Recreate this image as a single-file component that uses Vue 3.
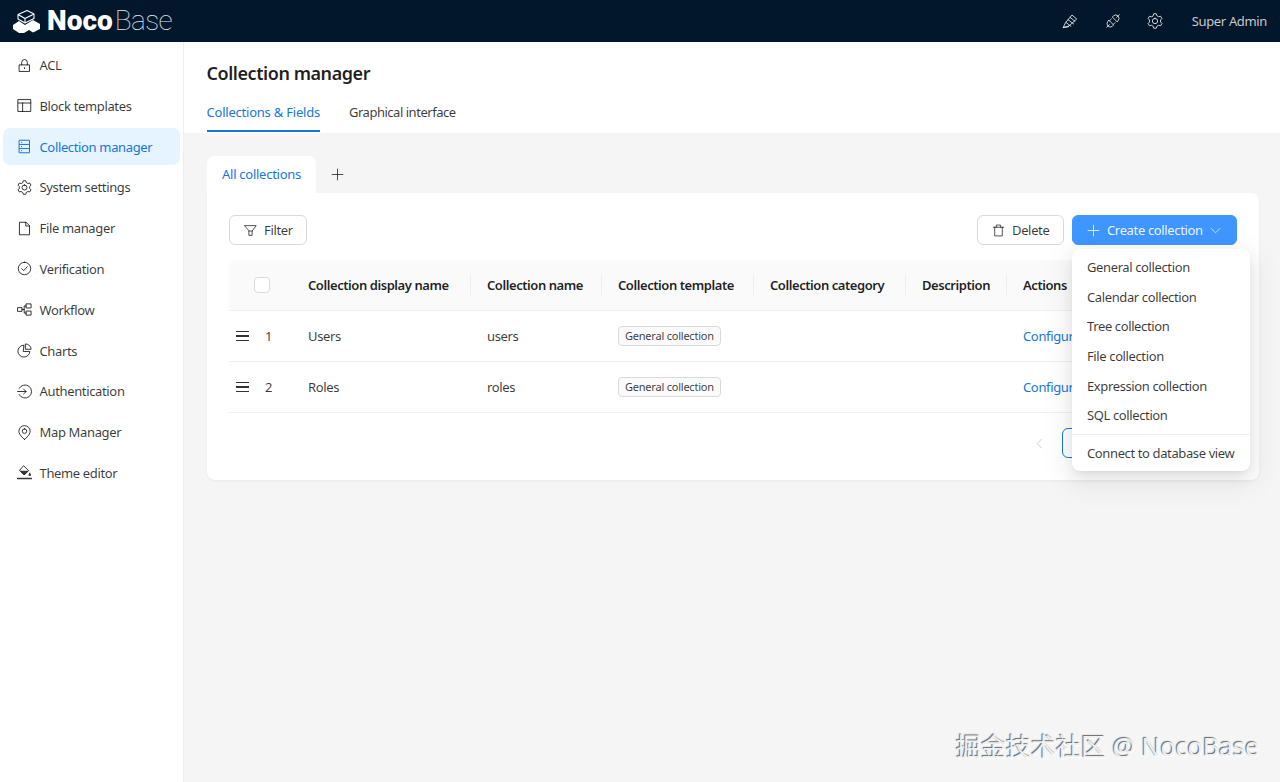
<script setup>
const gear = (() => {
  const pts = [];
  const n = 6;
  for (let i = 0; i < n; i++) {
    const a = (i / n) * Math.PI * 2 - Math.PI / 2;
    const w = Math.PI / n;
    const p = (r, t) => `${(12 + r * Math.cos(t)).toFixed(2)} ${(12 + r * Math.sin(t)).toFixed(2)}`;
    pts.push(p(8.4, a - w * 0.66), p(11, a - w * 0.34), p(11, a + w * 0.34), p(8.4, a + w * 0.66));
  }
  return `M${pts.join('L')}Z M12 8a4 4 0 1 0 0 8a4 4 0 1 0 0-8Z`;
})();

const icons = {
  lock: 'M4 11h16v10.500H4Z M7.500 11V7a4.500 4.500 0 0 1 9 0v4 M12 15.500v1.500',
  layout: 'M2 2.500h20v19H2Z M2 8h20 M9 8v13.500',
  table: 'M4 2h16v20H4Z M4 8.700h16 M4 15.300h16 M7 5.400h.6 M7 12h.6 M7 18.700h.6',
  gear,
  file: 'M4.500 2h10L20 7.500V22H4.500Z M14 2v6h6',
  check: 'M12 2a10 10 0 1 0 0 20a10 10 0 1 0 0-20Z M7.500 12.200l3.200 3.200l5.800-6.400',
  flow: 'M1.500 9h6.500v6H1.500Z M15 3h7.500v6.500H15Z M15 14.500h7.500V21H15Z M8 12h3.500V6.300H15 M11.500 12v5.700H15',
  pie: 'M10.500 3.500a9.500 9.500 0 1 0 10 10H10.500Z M14 1.500a8.500 8.500 0 0 1 8.500 8.500H14Z',
  login: 'M3.500 7A10.500 10.500 0 1 1 3.500 17 M1 12H14.500 M10.500 8L14.500 12l-4 4',
  pin: 'M12 23s-9-6.500-9-13a9 9 0 0 1 18 0C21 16.500 12 23 12 23Z M12 6.200a3.600 3.600 0 1 0 0 7.200a3.600 3.600 0 1 0 0-7.200Z',
  brush: 'M2 21.500L5 15L15 3l7 6L11 19Z M2 21.500L9 21L11 19 M5.800 14l7.700 6 M9 10l8.500 6.500 M12 6.500l7.500 6',
  plug: 'M2.500 21.500l4-4 M21.500 2.500l-4 4 M6 11l7 7l-2 2a5 5 0 0 1-7-7Z M18 13l-7-7l2-2a5 5 0 0 1 7 7Z M9.500 9l-2.500 2.500 M15 14.500l-2.500 2.500',
  filter: 'M1.500 3h21L15 13v8H9v-8Z M9 13h6',
  trash: 'M2.500 6h19 M8 6V2h8v4 M5 6v16h14V6',
  plus: 'M12 2v20 M2 12h20',
  down: 'M2.500 7.500L12 17l9.500-9.500',
  left: 'M16.500 2.500L7 12l9.500 9.500',
};

const menu = [
  { label: 'ACL', icon: 'lock' },
  { label: 'Block templates', icon: 'layout' },
  { label: 'Collection manager', icon: 'table', active: true },
  { label: 'System settings', icon: 'gear' },
  { label: 'File manager', icon: 'file' },
  { label: 'Verification', icon: 'check' },
  { label: 'Workflow', icon: 'flow' },
  { label: 'Charts', icon: 'pie' },
  { label: 'Authentication', icon: 'login' },
  { label: 'Map Manager', icon: 'pin' },
  { label: 'Theme editor', icon: 'paint' },
];

const heads = ['Collection display name', 'Collection name', 'Collection template', 'Collection category', 'Description', 'Actions'];
const rows = [
  { id: 1, title: 'Users', name: 'users' },
  { id: 2, title: 'Roles', name: 'roles' },
];
const options = ['General collection', 'Calendar collection', 'Tree collection', 'File collection', 'Expression collection', 'SQL collection'];
</script>

<template>
  <div class="app">
    <header class="top">
      <div class="logo">
        <svg class="logo-mark" viewBox="0 0 27 23" width="27" height="23">
          <path d="M5 4.500L14 .5L21 4L12 8.500Z M5 4.500V9L12 13V8.500 M21 4V8.500L12 13" fill="none" stroke="#fff" stroke-width="1.100" stroke-linejoin="round" />
          <path d="M0 15L6 11L12 15L20 10L27 14V19L20 22.500L16 20L11 23H6L0 19Z" fill="#fff" />
        </svg>
        <span class="logo-a">Noco</span><span class="logo-b">Base</span>
      </div>
      <div class="top-actions">
        <svg class="ic top-ic" viewBox="0 0 24 24"><path :d="icons.brush" /></svg>
        <svg class="ic top-ic" viewBox="0 0 24 24"><path :d="icons.plug" /></svg>
        <svg class="ic top-ic" viewBox="0 0 24 24"><path :d="icons.gear" /></svg>
        <span class="user">Super Admin</span>
      </div>
    </header>
    <div class="body">
      <aside class="side">
        <div v-for="m in menu" :key="m.label" class="mi" :class="{ active: m.active }">
          <svg class="ic mi-ic" viewBox="0 0 24 24">
            <template v-if="m.icon === 'paint'">
              <path d="M11 1.500l7.500 7.500L11.500 16L4.500 9Z" />
              <path d="M4.500 9h14L11.500 16Z" class="solid" />
              <path d="M20.500 11.500l1.800 3.500a1.900 1.900 0 1 1-3.600 0Z" class="solid" />
              <path d="M1 21.500h22" class="thick" />
            </template>
            <path v-else :d="icons[m.icon]" />
          </svg>
          <span>{{ m.label }}</span>
        </div>
      </aside>
      <main class="main">
        <section class="page-head">
          <h1>Collection manager</h1>
          <nav class="tabs">
            <span class="tab on">Collections &amp; Fields</span>
            <span class="tab second">Graphical interface</span>
          </nav>
        </section>
        <section class="content">
          <div class="subtabs">
            <span class="subtab">All collections</span>
            <svg class="ic add" viewBox="0 0 24 24"><path :d="icons.plus" /></svg>
          </div>
          <div class="card">
            <div class="bar">
              <button class="btn filter">
                <svg class="ic btn-ic" viewBox="0 0 24 24"><path :d="icons.filter" /></svg>Filter
              </button>
              <div class="bar-right">
                <button class="btn del">
                  <svg class="ic btn-ic" viewBox="0 0 24 24"><path :d="icons.trash" /></svg>Delete
                </button>
                <button class="btn primary">
                  <svg class="ic btn-ic" viewBox="0 0 24 24"><path :d="icons.plus" /></svg>Create collection
                  <svg class="ic chev" viewBox="0 0 24 24"><path :d="icons.down" /></svg>
                </button>
              </div>
            </div>
            <div class="table">
              <div class="tr thead">
                <div class="td sel"><span class="checkbox"></span></div>
                <div v-for="h in heads" :key="h" class="td th">{{ h }}</div>
              </div>
              <div v-for="r in rows" :key="r.id" class="tr">
                <div class="td sel">
                  <span class="drag"><i></i><i></i><i></i></span>
                  <span class="num">{{ r.id }}</span>
                </div>
                <div class="td">{{ r.title }}</div>
                <div class="td">{{ r.name }}</div>
                <div class="td"><span class="tag">General collection</span></div>
                <div class="td"></div>
                <div class="td"></div>
                <div class="td link">Configure</div>
              </div>
            </div>
            <div class="pager">
              <svg class="ic pg-left" viewBox="0 0 24 24"><path :d="icons.left" /></svg>
              <span class="pg-num">1</span>
            </div>
            <div class="dropdown">
              <div v-for="o in options" :key="o" class="dd">{{ o }}</div>
              <div class="dd-sep"></div>
              <div class="dd">Connect to database view</div>
            </div>
          </div>
        </section>
      </main>
    </div>
    <div class="mark">掘金技术社区 @ NocoBase</div>
  </div>
</template>

<style>
html, body { margin: 0; background: #f5f5f5; }
</style>

<style scoped>
.app {
  width: 1280px;
  height: 782px;
  overflow: hidden;
  position: relative;
  display: flex;
  flex-direction: column;
  font-family: "Noto Sans", "Noto Sans CJK SC", sans-serif;
  font-size: 13px;
  letter-spacing: -0.35px;
  color: rgba(0, 0, 0, 0.78);
  background: #f5f5f5;
}
.ic { fill: none; stroke: currentColor; stroke-width: 1.600; stroke-linejoin: round; stroke-linecap: round; flex: none; }
.solid { fill: currentColor; stroke: none; }
.thick { stroke-width: 2.400; }
.top {
  height: 42px;
  flex: none;
  background: #02162c;
  color: #fff;
  display: flex;
  align-items: center;
  justify-content: space-between;
  padding: 0 13px;
}
.logo { display: flex; align-items: center; font-family: Roboto, sans-serif; font-size: 28px; line-height: 1; letter-spacing: 0; }
.logo-mark { margin-right: 7px; }
.logo-a { font-weight: 900; letter-spacing: 0; }
.logo-b { font-weight: 100; margin-left: 2px; letter-spacing: -0.6px; color: #dfe6ee; }
.top-actions { display: flex; align-items: center; color: rgba(255, 255, 255, 0.78); }
.top-ic { width: 16px; height: 16px; margin-right: 26.500px; stroke-width: 1.500; }
.user { font-size: 13px; margin-left: 2px; }
.body { flex: 1; display: flex; min-height: 0; }
.side {
  flex: none;
  background: #fff;
  border-right: 1px solid #eeeeee;
  padding: 4.500px 3px 0;
  box-sizing: content-box;
  width: 177px;
}
.mi {
  height: 37px;
  margin-bottom: 3.800px;
  display: flex;
  align-items: center;
  padding-left: 14px;
  border-radius: 7px;
  gap: 7.500px;
}
.mi.active { background: #e6f4ff; color: #1677e0; }
.mi-ic { width: 15px; height: 15px; }
.main { flex: 1; min-width: 0; display: flex; flex-direction: column; }
.page-head { background: #fff; height: 91px; padding: 0 22.500px; box-sizing: border-box; flex: none; }
h1 { margin: 0; padding-top: 19px; font-size: 18px; line-height: 25px; font-weight: 600; letter-spacing: -0.44px; color: rgba(0, 0, 0, 0.88); }
.tabs { display: flex; gap: 29px; margin-top: 16px; }
.tab { padding-bottom: 8px; line-height: 20px; border-bottom: 2px solid transparent; }
.tab.on { color: #1677e0; border-bottom-color: #1677e0; letter-spacing: -0.22px; }
.tab.second { letter-spacing: -0.47px; }
.content { padding: 23px 21px 0 23px; }
.subtabs { display: flex; align-items: center; height: 37px; }
.subtab {
  width: 109px;
  height: 37px;
  background: #fff;
  color: #1677e0;
  border-radius: 8px 8px 0 0;
  display: flex;
  align-items: center;
  justify-content: center;
  letter-spacing: -0.27px;
  padding-bottom: 1px;
  box-sizing: border-box;
}
.add { width: 13px; height: 13px; margin-left: 15px; }
.card {
  position: relative;
  height: 287px;
  background: #fff;
  border-radius: 0 8px 8px 8px;
  box-shadow: 0 1px 3px rgba(0, 0, 0, 0.05);
  padding: 22px;
  box-sizing: border-box;
}
.bar { display: flex; justify-content: space-between; height: 30px; margin-bottom: 15px; }
.bar-right { display: flex; gap: 8px; }
.btn {
  font: inherit;
  letter-spacing: inherit;
  color: inherit;
  height: 30px;
  padding: 0 14px;
  background: #fff;
  border: 1px solid #d9d9d9;
  border-radius: 6px;
  display: flex;
  align-items: center;
  gap: 7px;
}
.btn.filter { width: 78px; }
.btn.del { width: 87px; }
.btn-ic { width: 13px; height: 13px; }
.btn.primary { background: #4096ff; border-color: #4096ff; color: rgba(255, 255, 255, 0.92); padding: 0 14px; width: 165px; }
.chev { width: 11px; height: 11px; margin-left: 0; }
.table { width: 1008px; }
.tr {
  display: grid;
  grid-template-columns: 68px 179px 131px 152px 152px 101px 225px;
  height: 51px;
  border-bottom: 1px solid #f0f0f0;
  box-sizing: border-box;
  align-items: center;
}
.thead { background: #fafafa; border-radius: 8px 8px 0 0; }
.td { padding-left: 11px; white-space: nowrap; overflow: hidden; }
.th { font-weight: 600; letter-spacing: -0.43px; color: rgba(0, 0, 0, 0.88); position: relative; overflow: visible; }
.th::after {
  content: "";
  position: absolute;
  right: 5px;
  top: -1px;
  bottom: -1px;
  width: 1px;
  background: #eeeeee;
}
.th:last-child::after { display: none; }
.sel { padding-left: 0; display: flex; align-items: center; position: relative; }
.checkbox {
  margin-left: 25px;
  width: 14px;
  height: 14px;
  border: 1px solid #d9d9d9;
  border-radius: 4px;
  background: #fff;
}
.drag { display: flex; flex-direction: column; gap: 3px; width: 13px; margin-left: 7px; }
.drag i { display: block; height: 1.500px; background: #333; }
.num { margin-left: 16px; }
.tag {
  display: inline-block;
  font-size: 11px;
  line-height: 18px;
  letter-spacing: -0.22px;
  padding: 0 6px;
  border: 1px solid #d9d9d9;
  border-radius: 4px;
  background: #fafafa;
}
.link { color: #1677e0; }
.pager { height: 30px; margin-top: 15px; width: 1008px; }
.pg-left { width: 11px; height: 11px; color: #bbb; position: absolute; left: 827px; top: 245px; }
.pg-num {
  position: absolute;
  left: 855px;
  top: 235px;
  width: 30px;
  height: 28px;
  border: 1px solid #1677e0;
  border-radius: 6px;
  text-align: center;
  line-height: 28px;
  color: #1677e0;
}
.dropdown {
  position: absolute;
  left: 865px;
  top: 56px;
  width: 178px;
  height: 222px;
  box-sizing: border-box;
  background: #fff;
  border-radius: 8px;
  box-shadow: 0 6px 16px rgba(0, 0, 0, 0.08), 0 3px 6px -4px rgba(0, 0, 0, 0.12), 0 9px 28px 8px rgba(0, 0, 0, 0.05);
  padding: 4px 0;
}
.dd { height: 29.700px; line-height: 29.700px; padding-left: 15px; white-space: nowrap; letter-spacing: -0.38px; }
.dd-sep { height: 1px; background: #f0f0f0; margin: 3px 0 4px; }
.mark {
  position: absolute;
  right: 21px;
  top: 728px;
  font-size: 25px;
  line-height: 36px;
  letter-spacing: 0;
  color: #f0f0f0;
  text-shadow: -1px -1px 1px #666, 1px 1px 1px #fff;
  white-space: nowrap;
}
</style>
